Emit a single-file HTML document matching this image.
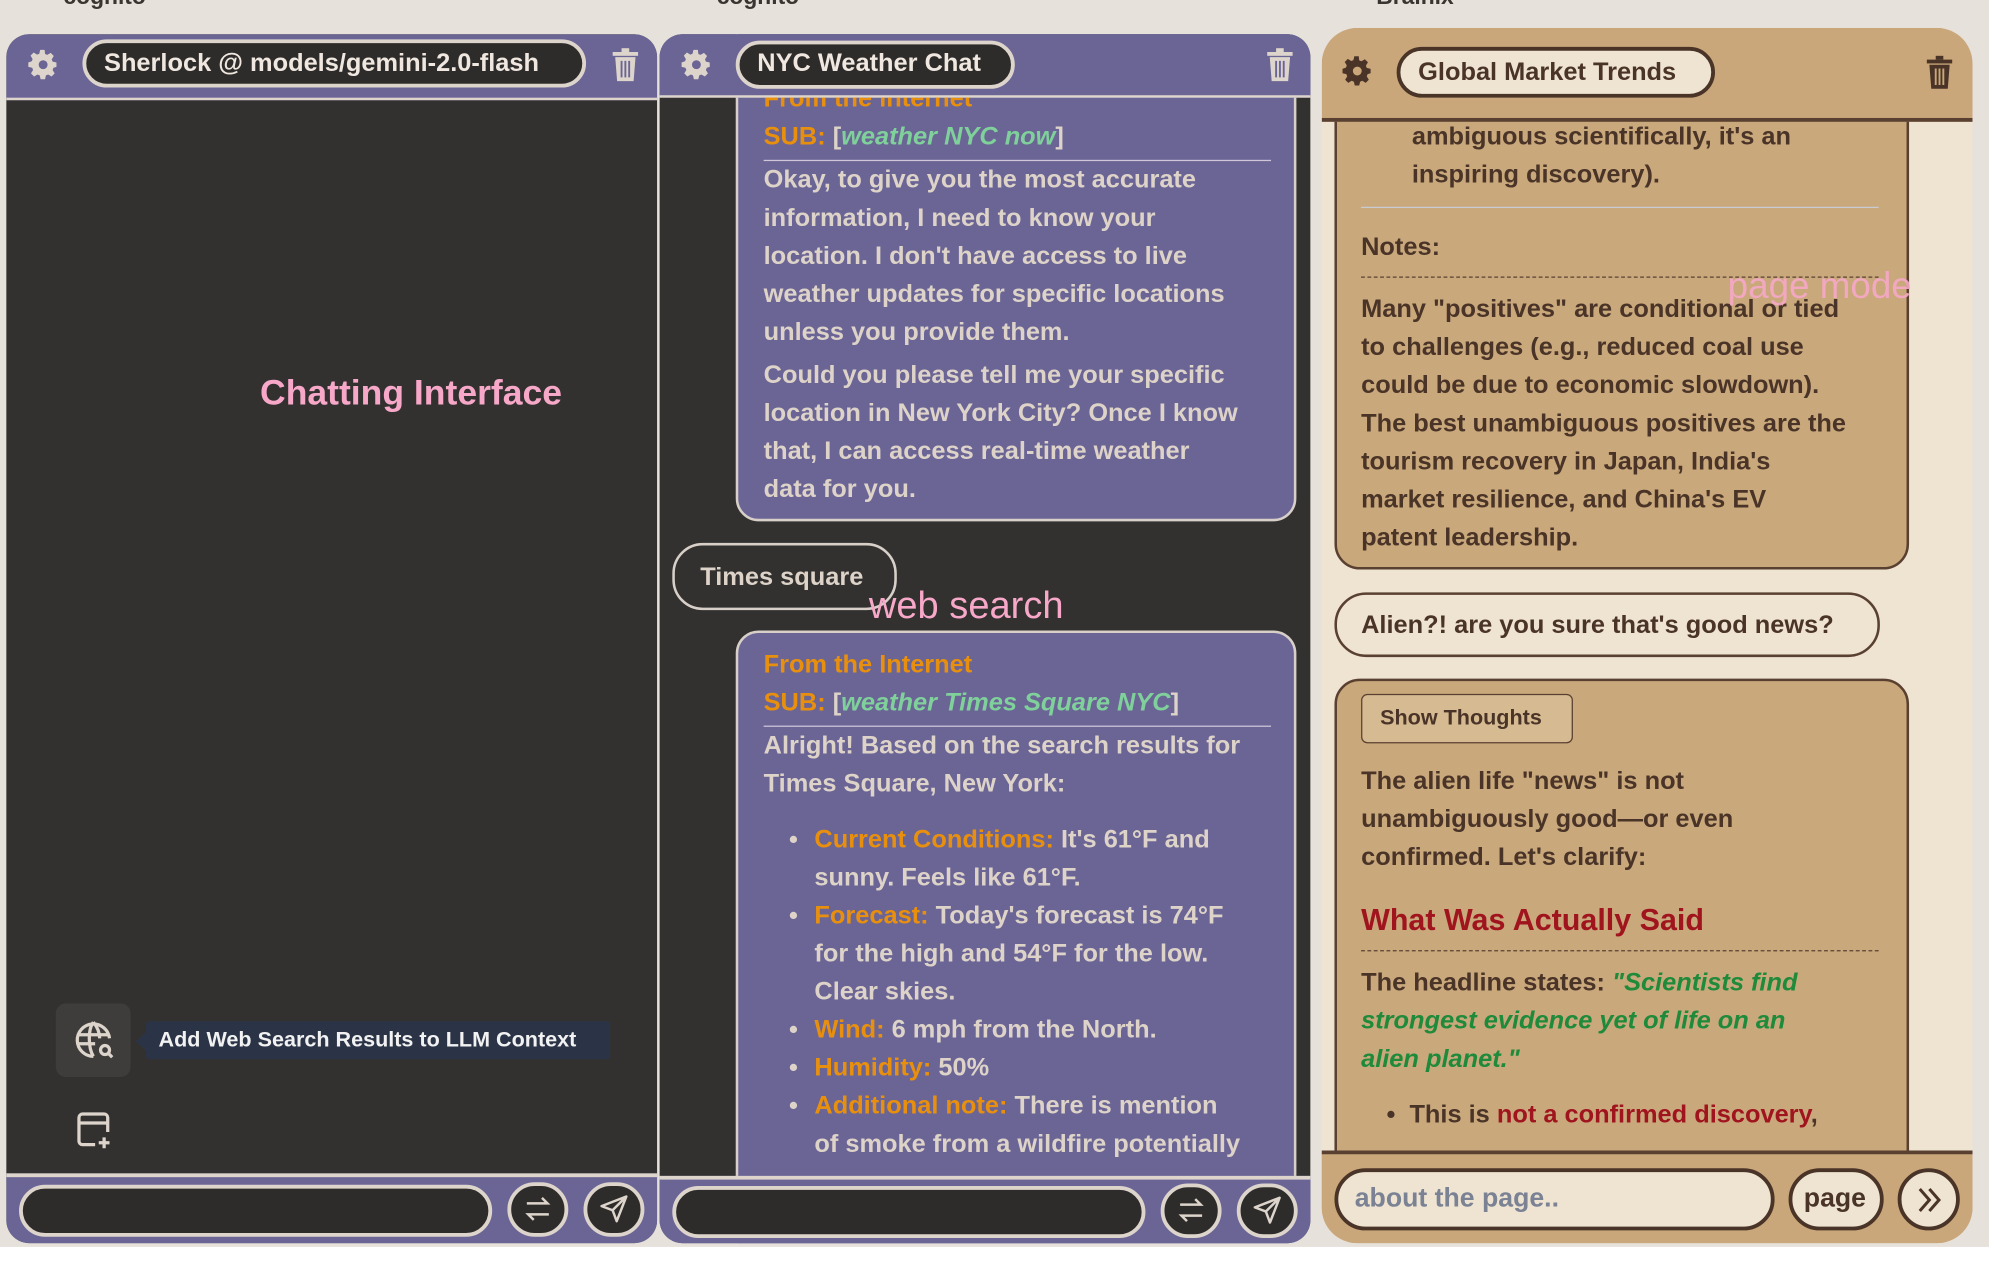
<!DOCTYPE html>
<html><head><meta charset="utf-8">
<style>
html,body{margin:0;padding:0;width:1989px;height:1266px;overflow:hidden;background:#fff}
#w{position:absolute;left:0;top:0;width:1568px;height:998px;transform:scale(1.26849);transform-origin:0 0;font-family:"Liberation Sans",sans-serif;font-weight:bold;background:#fff}
.a{position:absolute}
.bg{position:absolute;left:0;top:0;width:1568px;height:983px;background:#e6e1da}
.t{position:absolute;white-space:nowrap;line-height:30px;font-size:20px}
.pill{position:absolute;box-sizing:border-box;border-radius:999px}
.lt{color:#ddd3c8}
.or{color:#e8900e}
.gr{color:#7fd09a;font-style:italic}
.br{color:#4a3427}
</style></head><body><div id="w">
<div class="bg"></div>
<div class="t" style="left:50px;top:-18px;color:#3a3530;font-size:18px">cognito</div>
<div class="t" style="left:565px;top:-18px;color:#3a3530;font-size:18px">cognito</div>
<div class="t" style="left:1085px;top:-18px;color:#3a3530;font-size:18px">Brainix</div>

<!-- PANEL 1 -->
<div class="a" style="left:5px;top:27px;width:513px;height:953px;background:#323130;border-radius:18px;overflow:hidden">
  <div class="a" style="left:0;top:0;width:513px;height:50px;background:#6b6596;border-bottom:2px solid #ddd5cc"></div>
  <div class="a" style="left:0;top:898px;width:513px;height:55px;background:#6b6596;border-top:3px solid #ddd5cc"></div>
</div>
<svg class="a" style="left:20px;top:37px" width="28" height="28" viewBox="0 0 24 24"><path fill="#ddd5cc" d="M12 8a4 4 0 100 8 4 4 0 000-8zm9 5.5v-3l-2.6-.6-.6-1.5 1.4-2.3-2.1-2.1-2.3 1.4-1.5-.6L13 2h-3l-.6 2.6-1.5.6-2.3-1.4-2.1 2.1 1.4 2.3-.6 1.5L2 10.5v3l2.6.6.6 1.5-1.4 2.3 2.1 2.1 2.3-1.4 1.5.6.6 2.6h3l.6-2.6 1.5-.6 2.3 1.4 2.1-2.1-1.4-2.3.6-1.5z"/><circle cx="12" cy="12" r="3" fill="#6b6596"/></svg>
<div class="pill" style="left:65px;top:31px;width:397px;height:38px;background:#2e2c2a;border:3px solid #ddd5cc"></div>
<div class="t lt" style="left:82px;top:35px;font-size:20px;color:#f0e8e0">Sherlock @ models/gemini-2.0-flash</div>
<svg class="a" style="left:482px;top:37px" width="22" height="28" viewBox="0 0 22 28"><rect x="1" y="4" width="20" height="3" fill="#ddd5cc"/><rect x="8" y="1" width="6" height="3" fill="#ddd5cc"/><path d="M3 8h16l-1.5 19h-13z" fill="#ddd5cc"/><path d="M8 11v13M11 11v13M14 11v13" stroke="#6b6596" stroke-width="1.5"/></svg>
<div class="t" style="left:205px;top:293px;font-size:28px;color:#f7a8c8;font-weight:bold;line-height:34px">Chatting Interface</div>
<div class="a" style="left:44px;top:791px;width:59px;height:58px;background:#3e3d3b;border-radius:8px"></div>
<svg class="a" style="left:58px;top:803px" width="34" height="34" viewBox="0 0 24 24" fill="none" stroke="#ddd5cc" stroke-width="1.8"><path d="M20 11a9 9 0 10-9 10"/><path d="M3 9h17M3 14h9M11 2c-3 4-3 14 0 19M11 2c2.5 3 3.5 6 3.5 9"/><circle cx="17.5" cy="17.5" r="2.5"/><path d="M19.5 19.5l2 2"/></svg>
<div class="a" style="left:107px;top:814px;width:0;height:0;border-top:7px solid transparent;border-bottom:7px solid transparent;border-right:8px solid #2b3447"></div>
<div class="a" style="left:115px;top:805px;width:366px;height:30px;background:#2b3447;border-radius:3px"></div>
<div class="t" style="left:125px;top:805px;font-size:17px;color:#f2f2f2">Add Web Search Results to LLM Context</div>
<svg class="a" style="left:58px;top:874px" width="34" height="34" viewBox="0 0 24 24" fill="none" stroke="#ddd5cc" stroke-width="1.8"><path d="M12 20H5a2 2 0 01-2-2V5a2 2 0 012-2h12a2 2 0 012 2v8M3 8h16M17 16v6M14 19h6"/></svg>
<div class="pill" style="left:15px;top:934px;width:373px;height:41px;background:#2e2c2a;border:3px solid #ddd5cc"></div>
<div class="pill" style="left:400px;top:932px;width:48px;height:43px;background:#2e2c2a;border:3px solid #ddd5cc"></div>
<svg class="a" style="left:411px;top:940px" width="26" height="26" viewBox="0 0 24 24" fill="none" stroke="#ddd5cc" stroke-width="1.8"><path d="M4 8h15l-4-4M20 16H5l4 4"/></svg>
<div class="pill" style="left:460px;top:932px;width:48px;height:43px;background:#2e2c2a;border:3px solid #ddd5cc"></div>
<svg class="a" style="left:471px;top:940px" width="26" height="26" viewBox="0 0 24 24" fill="none" stroke="#ddd5cc" stroke-width="1.8" stroke-linejoin="round"><path d="M21 3L3 10l8 3 3 8z M11 13l10-10"/></svg>

<!-- PANEL 2 -->
<div class="a" style="left:520px;top:27px;width:513px;height:953px;background:#323130;border-radius:18px;overflow:hidden">
  <div class="a" style="left:60px;top:-30px;width:442px;height:414px;background:#6b6596;border:2px solid #d8d0c8;border-radius:18px;box-sizing:border-box"></div>
  <div class="a" style="left:10px;top:401px;width:177px;height:53px;border:2px solid #d8d0c8;border-radius:24px;box-sizing:border-box;background:#323130"></div>
  <div class="a" style="left:60px;top:470px;width:442px;height:520px;background:#6b6596;border:2px solid #d8d0c8;border-radius:18px;box-sizing:border-box"></div>
  <div class="a" style="left:0;top:0;width:513px;height:48px;background:#6b6596;border-bottom:2px solid #ddd5cc"></div>
  <div class="a" style="left:0;top:900px;width:513px;height:53px;background:#6b6596;border-top:3px solid #ddd5cc"></div>
</div>
<div class="t or" style="left:602px;top:63px">From the internet</div>
<div class="a" style="left:520px;top:27px;width:513px;height:48px;background:#6b6596;border-bottom:2px solid #ddd5cc;border-radius:18px 18px 0 0"></div>
<svg class="a" style="left:535px;top:37px" width="28" height="28" viewBox="0 0 24 24"><path fill="#ddd5cc" d="M12 8a4 4 0 100 8 4 4 0 000-8zm9 5.5v-3l-2.6-.6-.6-1.5 1.4-2.3-2.1-2.1-2.3 1.4-1.5-.6L13 2h-3l-.6 2.6-1.5.6-2.3-1.4-2.1 2.1 1.4 2.3-.6 1.5L2 10.5v3l2.6.6.6 1.5-1.4 2.3 2.1 2.1 2.3-1.4 1.5.6.6 2.6h3l.6-2.6 1.5-.6 2.3 1.4 2.1-2.1-1.4-2.3.6-1.5z"/><circle cx="12" cy="12" r="3" fill="#6b6596"/></svg>
<div class="pill" style="left:580px;top:32px;width:220px;height:38px;background:#2e2c2a;border:3px solid #ddd5cc"></div>
<div class="t" style="left:597px;top:35px;color:#f0e8e0">NYC Weather Chat</div>
<svg class="a" style="left:998px;top:37px" width="22" height="28" viewBox="0 0 22 28"><rect x="1" y="4" width="20" height="3" fill="#ddd5cc"/><rect x="8" y="1" width="6" height="3" fill="#ddd5cc"/><path d="M3 8h16l-1.5 19h-13z" fill="#ddd5cc"/><path d="M8 11v13M11 11v13M14 11v13" stroke="#6b6596" stroke-width="1.5"/></svg>
<div class="t lt" style="left:602px;top:93px"><span class="or">SUB:</span> [<span class="gr">weather NYC now</span>]</div>
<div class="a" style="left:602px;top:126px;width:400px;height:1px;background:#cfc6d8"></div>
<div class="t lt" style="left:602px;top:127px">Okay, to give you the most accurate<br>information, I need to know your<br>location. I don't have access to live<br>weather updates for specific locations<br>unless you provide them.</div>
<div class="t lt" style="left:602px;top:281px">Could you please tell me your specific<br>location in New York City? Once I know<br>that, I can access real-time weather<br>data for you.</div>
<div class="t lt" style="left:552px;top:440px">Times square</div>
<div class="t" style="left:685px;top:461px;font-size:30px;color:#f7a8c8;font-weight:normal;line-height:34px">web search</div>
<div class="t or" style="left:602px;top:509px">From the Internet</div>
<div class="t lt" style="left:602px;top:539px"><span class="or">SUB:</span> [<span class="gr">weather Times Square NYC</span>]</div>
<div class="a" style="left:602px;top:572px;width:400px;height:1px;background:#cfc6d8"></div>
<div class="t lt" style="left:602px;top:573px">Alright! Based on the search results for<br>Times Square, New York:</div>
<div class="t lt" style="left:622px;top:647px;line-height:30px">•<br>&nbsp;<br>•<br>&nbsp;<br>&nbsp;<br>•<br>•<br>•</div>
<div class="t lt" style="left:642px;top:647px"><span class="or">Current Conditions:</span> It's 61°F and<br>sunny. Feels like 61°F.<br><span class="or">Forecast:</span> Today's forecast is 74°F<br>for the high and 54°F for the low.<br>Clear skies.<br><span class="or">Wind:</span> 6 mph from the North.<br><span class="or">Humidity:</span> 50%<br><span class="or">Additional note:</span> There is mention<br>of smoke from a wildfire potentially</div>
<div class="a" style="left:520px;top:927px;width:513px;height:53px;background:#6b6596;border-top:3px solid #ddd5cc;border-radius:0 0 18px 18px;box-sizing:border-box"></div>
<div class="pill" style="left:530px;top:935px;width:373px;height:41px;background:#2e2c2a;border:3px solid #ddd5cc"></div>
<div class="pill" style="left:915px;top:933px;width:48px;height:43px;background:#2e2c2a;border:3px solid #ddd5cc"></div>
<svg class="a" style="left:926px;top:941px" width="26" height="26" viewBox="0 0 24 24" fill="none" stroke="#ddd5cc" stroke-width="1.8"><path d="M4 8h15l-4-4M20 16H5l4 4"/></svg>
<div class="pill" style="left:975px;top:933px;width:48px;height:43px;background:#2e2c2a;border:3px solid #ddd5cc"></div>
<svg class="a" style="left:986px;top:941px" width="26" height="26" viewBox="0 0 24 24" fill="none" stroke="#ddd5cc" stroke-width="1.8" stroke-linejoin="round"><path d="M21 3L3 10l8 3 3 8z M11 13l10-10"/></svg>

<!-- PANEL 3 -->
<div class="a" style="left:1042px;top:22px;width:513px;height:958px;background:#efe4d2;border-radius:28px;overflow:hidden">
  <div class="a" style="left:10px;top:40px;width:453px;height:387px;background:#c9a87c;border:2px solid #5a4030;border-radius:20px;box-sizing:border-box"></div>
  <div class="a" style="left:10px;top:445px;width:430px;height:51px;background:#efe4d2;border:2px solid #5a4030;border-radius:25px;box-sizing:border-box"></div>
  <div class="a" style="left:10px;top:513px;width:453px;height:420px;background:#c9a87c;border:2px solid #5a4030;border-radius:20px;box-sizing:border-box"></div>
  <div class="a" style="left:0;top:0;width:513px;height:71px;background:#c9a77a;border-bottom:3px solid #5a4030"></div>
  <div class="a" style="left:0;top:885px;width:513px;height:73px;background:#c9a77a;border-top:3px solid #5a4030;box-sizing:border-box"></div>
</div>
<svg class="a" style="left:1056px;top:42px" width="28" height="28" viewBox="0 0 24 24"><path fill="#4a3427" d="M12 8a4 4 0 100 8 4 4 0 000-8zm9 5.5v-3l-2.6-.6-.6-1.5 1.4-2.3-2.1-2.1-2.3 1.4-1.5-.6L13 2h-3l-.6 2.6-1.5.6-2.3-1.4-2.1 2.1 1.4 2.3-.6 1.5L2 10.5v3l2.6.6.6 1.5-1.4 2.3 2.1 2.1 2.3-1.4 1.5.6.6 2.6h3l.6-2.6 1.5-.6 2.3 1.4 2.1-2.1-1.4-2.3.6-1.5z"/><circle cx="12" cy="12" r="3" fill="#c9a77a"/></svg>
<div class="pill" style="left:1101px;top:37px;width:251px;height:40px;background:#efe4d2;border:3px solid #4a3427"></div>
<div class="t br" style="left:1118px;top:42px">Global Market Trends</div>
<svg class="a" style="left:1518px;top:43px" width="22" height="28" viewBox="0 0 22 28"><rect x="1" y="4" width="20" height="3" fill="#4a3427"/><rect x="8" y="1" width="6" height="3" fill="#4a3427"/><path d="M3 8h16l-1.5 19h-13z" fill="#4a3427"/><path d="M8 11v13M11 11v13M14 11v13" stroke="#c9a77a" stroke-width="1.5"/></svg>
<div class="t br" style="left:1113px;top:93px">ambiguous scientifically, it's an<br>inspiring discovery).</div>
<div class="a" style="left:1073px;top:163px;width:408px;height:1px;background:#c8ccd2"></div>
<div class="t br" style="left:1073px;top:180px">Notes:</div>
<div class="a" style="left:1073px;top:218px;width:408px;border-top:1px dashed #5a4030"></div>
<div class="t br" style="left:1073px;top:229px">Many "positives" are conditional or tied<br>to challenges (e.g., reduced coal use<br>could be due to economic slowdown).<br>The best unambiguous positives are the<br>tourism recovery in Japan, India's<br>market resilience, and China's EV<br>patent leadership.</div>
<div class="t" style="left:1362px;top:209px;font-size:29px;color:#f7a8c8;font-weight:normal;line-height:34px;opacity:.9">page mode</div>
<div class="t br" style="left:1073px;top:478px">Alien?! are you sure that's good news?</div>
<div class="a" style="left:1073px;top:547px;width:167px;height:39px;border:1px solid #5a4030;border-radius:5px;background:#d6ba92;box-sizing:border-box"></div>
<div class="t br" style="left:1088px;top:551px;font-size:17px">Show Thoughts</div>
<div class="t br" style="left:1073px;top:601px">The alien life "news" is not<br>unambiguously good—or even<br>confirmed. Let's clarify:</div>
<div class="t" style="left:1073px;top:711px;font-size:24px;color:#a0141e">What Was Actually Said</div>
<div class="a" style="left:1073px;top:749px;width:408px;border-top:1px dashed #5a4030"></div>
<div class="t br" style="left:1073px;top:760px">The headline states: <i style="color:#1e8a3a">"Scientists find</i><br><i style="color:#1e8a3a">strongest evidence yet of life on an</i><br><i style="color:#1e8a3a">alien planet."</i></div>
<div class="t br" style="left:1093px;top:864px">•&nbsp;&nbsp;This is <span style="color:#a0141e">not a confirmed discovery</span>,</div>
<div class="a" style="left:1042px;top:907px;width:513px;height:73px;background:#c9a77a;border-top:3px solid #5a4030;border-radius:0 0 28px 28px;box-sizing:border-box"></div>
<div class="pill" style="left:1052px;top:921px;width:347px;height:49px;background:#efe4d2;border:3px solid #4a3427"></div>
<div class="t" style="left:1068px;top:930px;color:#7a8294;font-size:21px">about the page..</div>
<div class="pill" style="left:1410px;top:921px;width:75px;height:49px;background:#efe4d2;border:3px solid #4a3427"></div>
<div class="t br" style="left:1422px;top:930px;font-size:21px">page</div>
<div class="pill" style="left:1496px;top:921px;width:49px;height:49px;background:#efe4d2;border:3px solid #4a3427"></div>
<svg class="a" style="left:1508px;top:933px" width="26" height="26" viewBox="0 0 24 24" fill="none" stroke="#4a3427" stroke-width="2.2"><path d="M5 4l7 8-7 8M12 4l7 8-7 8"/></svg>
</div></body></html>
